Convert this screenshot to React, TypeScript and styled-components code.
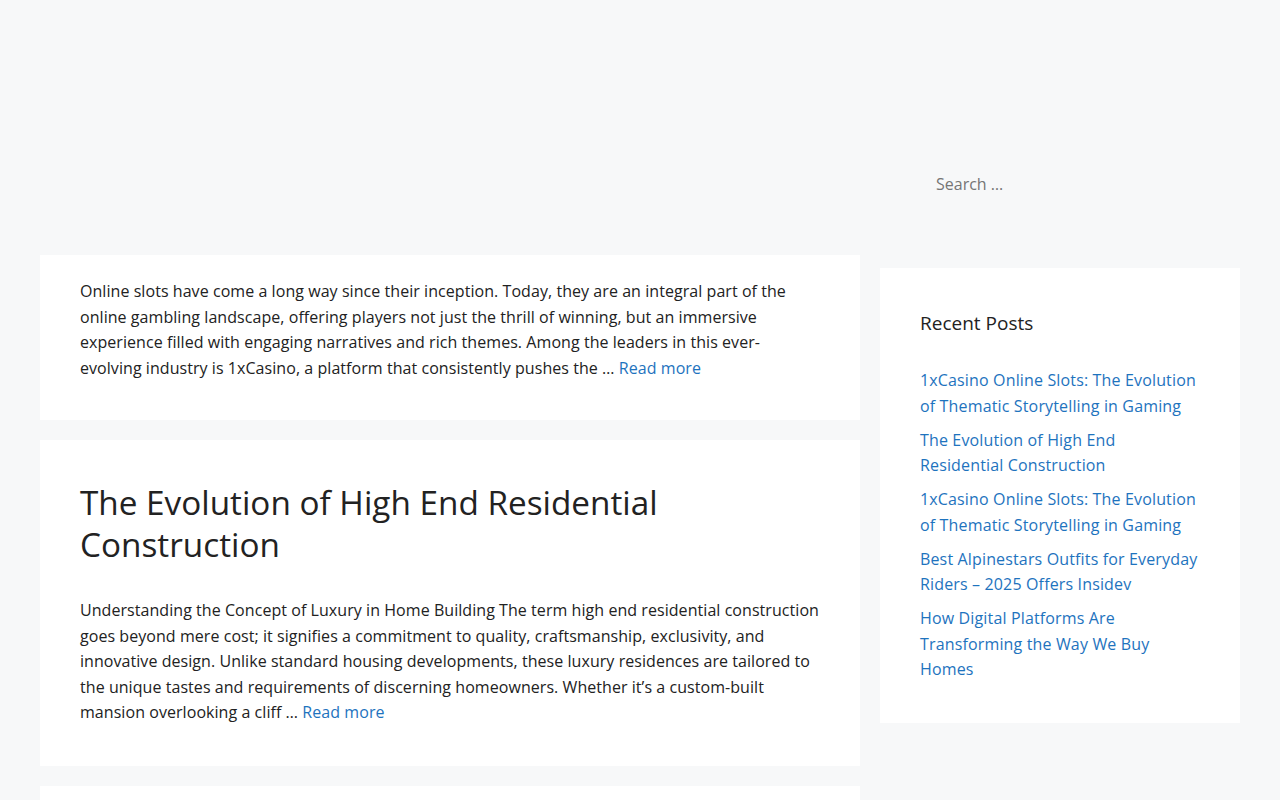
import React from 'react';
import styled, {createGlobalStyle} from "styled-components";

const GlobalStyle = createGlobalStyle`
  html, body {
    margin: 0;
    padding: 0;
  }
  body {
    background: #f7f8f9;
    color: #222222;
    font-family: "Open Sans", "Noto Sans", sans-serif;
    font-size: 16px;
    line-height: 25.5px;
  }
  * {
    box-sizing: border-box;
  }
`

const posts = [
    {
        title: '',
        excerpt: 'Online slots have come a long way since their inception. Today, they are an integral part of the online gambling landscape, offering players not just the thrill of winning, but an immersive experience filled with engaging narratives and rich themes. Among the leaders in this ever-evolving industry is 1xCasino, a platform that consistently pushes the …',
    },
    {
        title: 'The Evolution of High End Residential Construction',
        excerpt: 'Understanding the Concept of Luxury in Home Building The term high end residential construction goes beyond mere cost; it signifies a commitment to quality, craftsmanship, exclusivity, and innovative design. Unlike standard housing developments, these luxury residences are tailored to the unique tastes and requirements of discerning homeowners. Whether it’s a custom-built mansion overlooking a cliff …',
    },
    {
        title: '',
        excerpt: '',
    },
];

const recent = [
    '1xCasino Online Slots: The Evolution of Thematic Storytelling in Gaming',
    'The Evolution of High End Residential Construction',
    '1xCasino Online Slots: The Evolution of Thematic Storytelling in Gaming',
    'Best Alpinestars Outfits for Everyday Riders – 2025 Offers Insidev',
    'How Digital Platforms Are Transforming the Way We Buy Homes',
];

export default function App() {
    return (
        <>
            <GlobalStyle/>
            <Header>
                <HeaderInner>
                    <SearchForm onSubmit={e => e.preventDefault()}>
                        <SearchInput type="search" placeholder="Search …"/>
                    </SearchForm>
                </HeaderInner>
            </Header>
            <Site>
                <Main>
                    {posts.map((p, i) => (
                        <Article key={i} $first={i === 0}>
                            {p.title && <EntryTitle>{p.title}</EntryTitle>}
                            {p.excerpt && (
                                <Excerpt>
                                    {p.excerpt} <MoreLink href="#">Read more</MoreLink>
                                </Excerpt>
                            )}
                        </Article>
                    ))}
                </Main>
                <Sidebar>
                    <Widget>
                        <WidgetTitle>Recent Posts</WidgetTitle>
                        <PostList>
                            {recent.map((r, i) => (
                                <li key={i}><PostLink href="#">{r}</PostLink></li>
                            ))}
                        </PostList>
                    </Widget>
                </Sidebar>
            </Site>
        </>
    );
}

const Header = styled.header`
  height: 235px;
`

const HeaderInner = styled.div`
  max-width: 1200px;
  margin: 0 auto;
  height: 100%;
  display: flex;
  justify-content: flex-end;
  align-items: flex-start;
  padding-top: 165px;
`

const SearchForm = styled.form`
  width: 320px;
`

const SearchInput = styled.input`
  width: 100%;
  border: none;
  background: transparent;
  font-family: inherit;
  font-size: 16px;
  line-height: 25.5px;
  padding: 7px 16px;
  color: #222;
  outline: none;

  &::placeholder {
    color: #757575;
  }
`

const Site = styled.div`
  max-width: 1200px;
  margin: 0 auto;
  display: flex;
  align-items: flex-start;
  gap: 20px;
  padding-top: 20px;
`

const Main = styled.main`
  width: 820px;
  flex-shrink: 0;
  display: flex;
  flex-direction: column;
  gap: 20px;
`

const Article = styled.article<{$first?: boolean}>`
  background: #ffffff;
  padding: ${p => p.$first ? '24px 40px 39px' : '40px'};
  min-height: 60px;
`

const EntryTitle = styled.h2`
  margin: 0 0 33px;
  padding-top: 1px;
  font-size: 33.3px;
  font-weight: 400;
  line-height: 42px;
  color: #222222;
`

const Excerpt = styled.p`
  margin: 0;
  letter-spacing: 0.057px;
`

const MoreLink = styled.a`
  color: #1e73be;
  text-decoration: none;
`

const Sidebar = styled.aside`
  width: 360px;
  padding-top: 13px;
`

const Widget = styled.section`
  background: #ffffff;
  padding: 40px;
`

const WidgetTitle = styled.h2`
  margin: 0 0 30px;
  font-size: 19px;
  font-weight: 400;
  line-height: 30px;
`

const PostList = styled.ul`
  list-style: none;
  margin: 0;
  padding: 0;

  li {
    margin-bottom: 8.5px;
  }

  li:last-child {
    margin-bottom: 0;
  }
`

const PostLink = styled.a`
  color: #1e73be;
  text-decoration: none;
  letter-spacing: 0.15px;
`
